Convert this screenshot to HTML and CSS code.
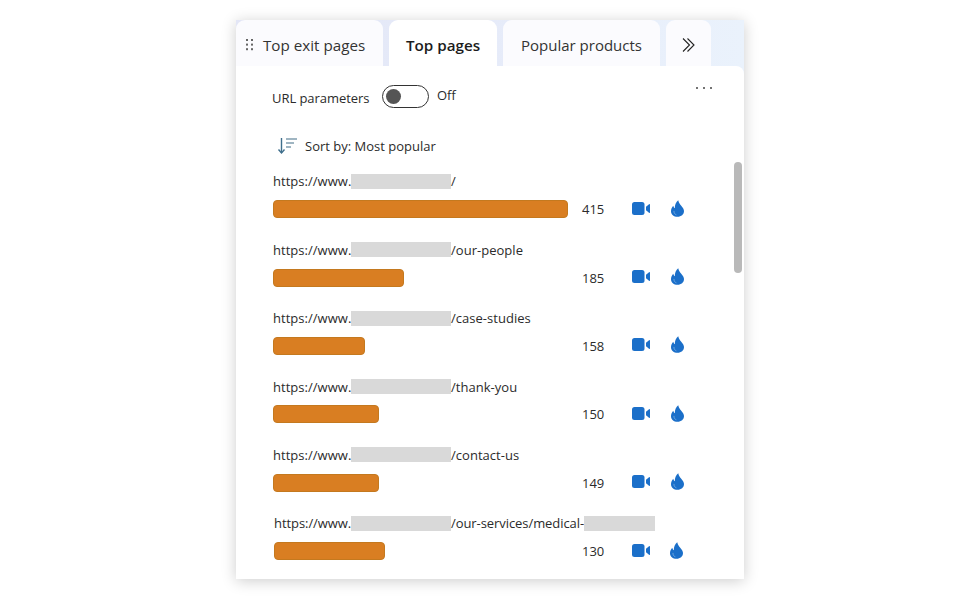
FILE: index.html

```html
<!DOCTYPE html>
<html lang="en">
<head>
    <meta charset="UTF-8">
    <title>Top pages</title>
    <link rel="stylesheet" href="styles.css">
</head>
<body>
    <svg class="icon-defs" width="0" height="0">
        <symbol id="video" viewBox="0 0 18 13">
            <rect x="0" y="0" width="12.5" height="13" rx="2.5" fill="#1b6fc9"/>
            <path d="M14 4.8 L17 2.2 Q18 1.6 18 2.8 V10.2 Q18 11.4 17 10.8 L14 8.2 Z" fill="#1b6fc9"/>
        </symbol>
        <symbol id="flame" viewBox="0 0 14 18">
            <path d="M7.8 0 C8.4 2.6 9.6 4 10.8 5.8 C12.6 8 14 9.6 14 11.8 C14 15.6 11 18 7 18 C3 18 0 15.6 0 12 C0 9.6 1 7.6 2.4 6 C2.8 7.2 3.2 8 4.2 8.6 C3.8 5.2 5.4 2 7.8 0 Z" fill="#1b6fc9"/>
            <path d="M3.2 11.6 C3 13.6 4 15.2 5.8 15.8" fill="none" stroke="#6ea6e0" stroke-width="1"/>
        </symbol>
    </svg>

    <div class="widget">
        <div class="tabs">
            <div class="tab tab-first">
                <svg class="grip" width="8" height="12" viewBox="0 0 8 12">
                    <g fill="#666">
                        <rect x="0" y="0" width="2" height="2"/><rect x="5" y="0" width="2" height="2"/>
                        <rect x="0" y="4.6" width="2" height="2"/><rect x="5" y="4.6" width="2" height="2"/>
                        <rect x="0" y="9.2" width="2" height="2"/><rect x="5" y="9.2" width="2" height="2"/>
                    </g>
                </svg>
                <span>Top exit pages</span>
            </div>
            <div class="tab tab-active">Top pages</div>
            <div class="tab tab-popular">Popular products</div>
            <div class="tab tab-more">
                <svg width="14" height="14" viewBox="0 0 14 14" fill="none" stroke="#222" stroke-width="1.1">
                    <path d="M1 0.5 L7.5 7 L1 13.5"/>
                    <path d="M5.5 0.5 L12 7 L5.5 13.5"/>
                </svg>
            </div>
        </div>

        <div class="card">
            <div class="card-menu">
                <i></i><i></i><i></i>
            </div>
            <div class="scroll-thumb"></div>

            <div class="toggle-row">
                <span class="toggle-label">URL parameters</span>
                <span class="toggle"><span class="knob"></span></span>
                <span class="toggle-state">Off</span>
            </div>

            <div class="sort-row">
                <svg width="20" height="20" viewBox="0 0 20 20" fill="none" stroke-width="1.4">
                    <g stroke="#3f6f8c">
                        <path d="M4.5 1 V16"/>
                        <path d="M1.5 12.5 L4.5 16 L7.5 12.5"/>
                    </g>
                    <g stroke="#7f9cae">
                        <path d="M9 2 H20"/>
                        <path d="M9 6 H17"/>
                        <path d="M9 10 H14"/>
                    </g>
                </svg>
                <span>Sort by: Most popular</span>
            </div>

            <div class="row">
                <div class="url"><span class="host">https://www.</span><span class="mask"></span>/</div>
                <div class="stats">
                    <div class="track"><div class="bar" style="width: 295px"></div></div>
                    <span class="count">415</span>
                    <svg class="ico-video"><use href="#video"/></svg>
                    <svg class="ico-flame"><use href="#flame"/></svg>
                </div>
            </div>
            <div class="row">
                <div class="url"><span class="host">https://www.</span><span class="mask"></span>/our-people</div>
                <div class="stats">
                    <div class="track"><div class="bar" style="width: 131px"></div></div>
                    <span class="count">185</span>
                    <svg class="ico-video"><use href="#video"/></svg>
                    <svg class="ico-flame"><use href="#flame"/></svg>
                </div>
            </div>
            <div class="row">
                <div class="url"><span class="host">https://www.</span><span class="mask"></span>/case-studies</div>
                <div class="stats">
                    <div class="track"><div class="bar" style="width: 92px"></div></div>
                    <span class="count">158</span>
                    <svg class="ico-video"><use href="#video"/></svg>
                    <svg class="ico-flame"><use href="#flame"/></svg>
                </div>
            </div>
            <div class="row">
                <div class="url"><span class="host">https://www.</span><span class="mask"></span>/thank-you</div>
                <div class="stats">
                    <div class="track"><div class="bar" style="width: 106px"></div></div>
                    <span class="count">150</span>
                    <svg class="ico-video"><use href="#video"/></svg>
                    <svg class="ico-flame"><use href="#flame"/></svg>
                </div>
            </div>
            <div class="row">
                <div class="url"><span class="host">https://www.</span><span class="mask"></span>/contact-us</div>
                <div class="stats">
                    <div class="track"><div class="bar" style="width: 106px"></div></div>
                    <span class="count">149</span>
                    <svg class="ico-video"><use href="#video"/></svg>
                    <svg class="ico-flame"><use href="#flame"/></svg>
                </div>
            </div>
            <div class="row row-last">
                <div class="url"><span class="host">https://www.</span><span class="mask"></span>/our-services/medical-<span class="mask mask-end"></span></div>
                <div class="stats">
                    <div class="track"><div class="bar" style="width: 111px"></div></div>
                    <span class="count">130</span>
                    <svg class="ico-video"><use href="#video"/></svg>
                    <svg class="ico-flame"><use href="#flame"/></svg>
                </div>
            </div>
        </div>
    </div>
</body>
</html>
```

FILE: styles.css

```css
body {
    margin: 0;
    height: 599px;
    overflow: hidden;
    background: #fff;
    font-family: "Open Sans", "Noto Sans", sans-serif;
    color: #2b2b2b;
}
.icon-defs {
    display: block;
    height: 0;
}

.widget {
    width: 508px;
    height: 559px;
    margin: 20px 0 0 236px;
    background: linear-gradient(90deg, #e3e6f6 0%, #e6ebf9 50%, #eaf2fc 100%);
    box-shadow: 0 2px 14px rgba(0, 0, 0, 0.2);
    display: flex;
    flex-direction: column;
}

/* Tabs */
.tabs {
    display: flex;
    gap: 6px;
    height: 46px;
    flex-shrink: 0;
}
.tab {
    display: flex;
    align-items: center;
    justify-content: center;
    box-sizing: border-box;
    padding-top: 3px;
    background: #fbfbfe;
    border-radius: 9px 9px 0 0;
    font-size: 15.2px;
    color: #333;
}
.tab-first {
    width: 147px;
    gap: 9px;
    justify-content: flex-start;
    padding-left: 10px;
}
.tab-active {
    width: 108px;
    background: #fff;
    font-weight: 600;
    color: #1c1c1c;
}
.tab-popular {
    width: 157px;
    font-size: 15px;
}
.tab-more {
    width: 45px;
}

/* Card */
.card {
    position: relative;
    flex: 1;
    min-height: 0;
    overflow: hidden;
    background: #fff;
    border-radius: 0 8px 0 0;
    padding: 19px 0 0 36px;
}
.card-menu {
    position: absolute;
    top: 21px;
    right: 32px;
    display: flex;
    gap: 5px;
}
.card-menu i {
    width: 2px;
    height: 2px;
    border-radius: 50%;
    background: #444;
}
.scroll-thumb {
    position: absolute;
    top: 96px;
    right: 2px;
    width: 8px;
    height: 111px;
    border-radius: 4px;
    background: #b9b9b9;
}

.toggle-row {
    display: flex;
    align-items: center;
    height: 23px;
    font-size: 13px;
}
.toggle-label {
    width: 110px;
    padding-top: 2px;
    letter-spacing: -0.05px;
}
.toggle {
    display: flex;
    align-items: center;
    box-sizing: border-box;
    width: 47px;
    height: 23px;
    padding-left: 3px;
    border: 1px solid #333;
    border-radius: 12px;
}
.knob {
    width: 15px;
    height: 15px;
    border-radius: 50%;
    background: #555;
}
.toggle-state {
    margin-left: 8px;
    padding-bottom: 4px;
}

.sort-row {
    display: flex;
    align-items: center;
    gap: 8px;
    height: 20px;
    margin: 29px 0 0 5px;
    font-size: 13px;
}
.sort-row span {
    position: relative;
    top: -1px;
}

/* Page rows */
.row {
    height: 68.4px;
    padding-left: 1px;
    font-size: 13px;
}
.sort-row + .row {
    margin-top: 15.4px;
}
.url {
    display: flex;
    align-items: center;
    height: 18px;
    white-space: pre;
    letter-spacing: 0.03px;
}
.host {
    width: 78px;
}
.mask {
    width: 100px;
    height: 15px;
    background: #d9d9d9;
}
.mask-end {
    width: 71px;
}
.stats {
    display: flex;
    align-items: center;
    height: 22px;
    margin-top: 7.8px;
}
.track {
    width: 309px;
}
.bar {
    box-sizing: border-box;
    height: 18px;
    background: #d97e22;
    border: 1px solid #c4791f;
    border-radius: 4px;
}
.count {
    width: 50px;
    font-size: 13px;
}
.ico-video {
    width: 18px;
    height: 13px;
    margin: 0 21px 2px 0;
}
.ico-flame {
    width: 13px;
    height: 17px;
    margin-bottom: 2px;
}
.row-last {
    padding-left: 2px;
}
.row-last .host {
    width: 77px;
}
.row-last .url {
    letter-spacing: -0.07px;
}
.row-last .track {
    width: 308px;
}
.row-last .ico-video {
    margin-right: 20px;
}
```
